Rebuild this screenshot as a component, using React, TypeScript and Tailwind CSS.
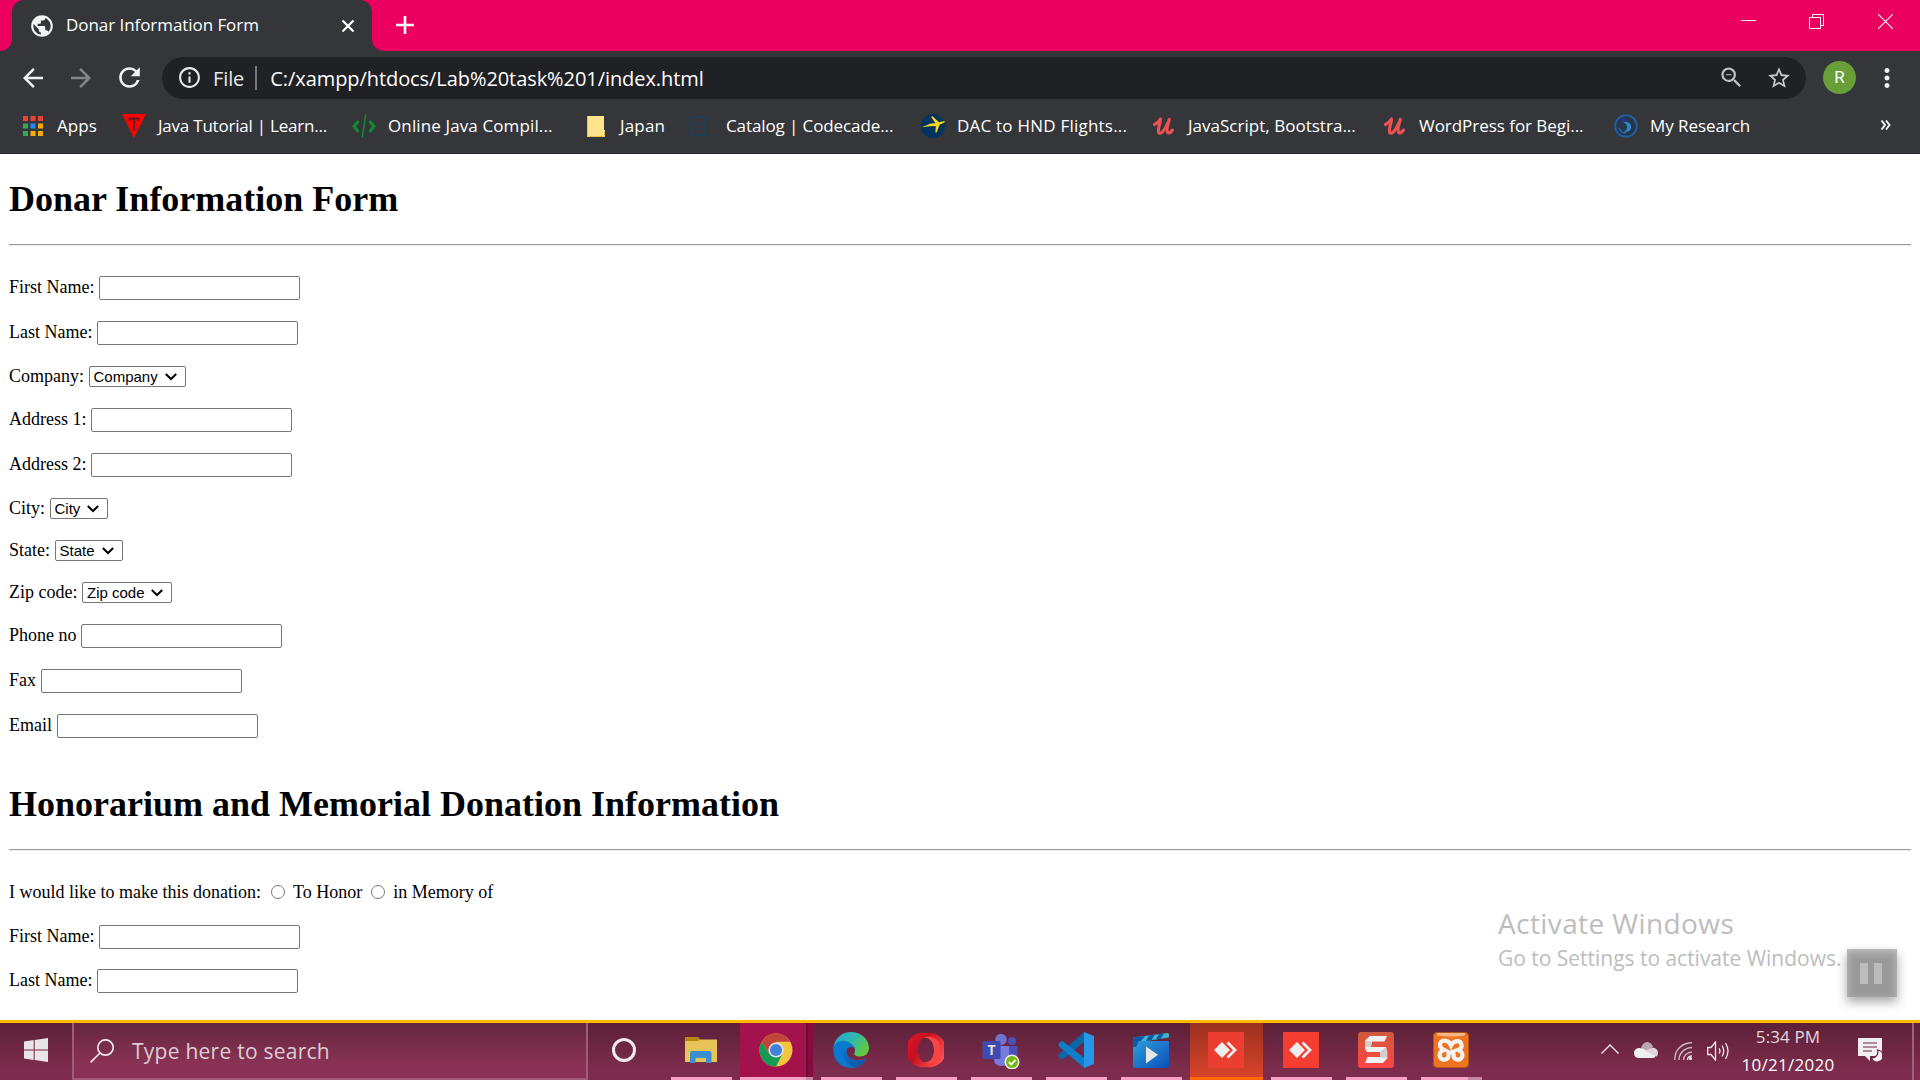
import type { ReactNode } from "react";
import {
  MdArrowBack,
  MdArrowForward,
  MdInfoOutline,
  MdMoreVert,
  MdPublic,
  MdRefresh,
  MdStarBorder,
  MdZoomOut,
} from "react-icons/md";

/* ---------- bookmark icons ---------- */

const APP_COLORS = ["#ea4335", "#ea4335", "#ea4335", "#34a853", "#1a8cff", "#f9ab00", "#34a853", "#f9ab00", "#f9ab00"];

function AppsIcon() {
  return (
    <svg viewBox="0 0 24 24" className="size-6">
      {APP_COLORS.map((c, i) => (
        <rect key={i} x={2 + (i % 3) * 7.5} y={2 + Math.floor(i / 3) * 7.5} width="5" height="5" fill={c} />
      ))}
    </svg>
  );
}

function TriangleIcon() {
  return (
    <svg viewBox="0 0 24 24" className="size-6">
      <path d="M0 0H24L12 24Z" fill="#ff0000" />
      <path d="M7.500 7V4.500H16.500V7M12 4.500V17" stroke="#5a1c1f" strokeWidth="1.800" fill="none" />
    </svg>
  );
}

function CodeIcon() {
  return (
    <svg viewBox="0 0 24 24" className="size-6" fill="none" stroke="#12882f">
      <path d="M6.500 7 2 12.500 6.500 18M17.500 7 22 12.500 17.500 18" strokeWidth="3.200" />
      <path d="M13.800 0.500 10.200 23.500" strokeWidth="1.600" />
    </svg>
  );
}

function FolderMark() {
  return (
    <svg viewBox="0 0 24 24" className="size-6">
      <path d="M3 2H20V16H21V23H3Z" fill="#ffe38c" />
      <path d="M3.500 2V22.500H20.500V17" stroke="#e9c04a" fill="none" />
    </svg>
  );
}

function CatalogMark() {
  return (
    <svg viewBox="0 0 24 24" className="size-6" fill="none" stroke="#1f4058">
      <rect x="1" y="3" width="13" height="18" strokeWidth="1.800" />
      <path d="M10.500 10.200C8 8.400 5 9.400 5 12.200S8 16 10.500 14.200" strokeWidth="1.600" />
      <path d="M18 21.500H23.500" strokeWidth="1.600" />
    </svg>
  );
}

function PlaneMark() {
  return (
    <svg viewBox="0 0 24 24" className="size-6">
      <circle cx="12" cy="12" r="12" fill="#00355f" />
      <path
        d="M0.500 13.200 10 9.600 14.500 9.300 10 2.800 11.500 2.200 18 8.200 23.500 7 23.500 8.500 18.600 10.800 15.600 18.500 14.400 18.500 14.800 12 9 12.200Z"
        fill="#ffd51e"
      />
    </svg>
  );
}

function CursiveU() {
  return (
    <svg viewBox="0 0 24 24" className="size-6" fill="none" stroke="#eb5252" strokeLinecap="round" strokeLinejoin="round">
      <path d="M2.500 10.500C5 9.500 7 7.500 8.500 5C8.500 9.500 5.500 14 6.500 18C8 21.500 12.500 17 15.500 9.500" strokeWidth="3.200" />
      <path d="M17.300 5.500C15.500 11 14 16.500 15.800 18.500C17.500 19.500 19.500 17.500 20.500 16" strokeWidth="3.200" />
    </svg>
  );
}

function ResearchMark() {
  return (
    <svg viewBox="0 0 24 24" className="size-6" fill="none">
      <circle cx="12" cy="12" r="10.800" fill="#26364b" stroke="#1f5f9f" strokeWidth="2" />
      <path d="M9 8C14 7 18 10 17 14C16.200 17.500 12.500 18.500 10 17.500C14 16 14.500 10.500 9 8Z" fill="#2f86cc" />
      <path d="M5.500 14C6 17 9 19 12 19" stroke="#2b6fb8" strokeWidth="1.500" />
      <circle cx="9" cy="6" r="2" fill="#2b2f9c" />
    </svg>
  );
}

interface Mark {
  icon: ReactNode;
  label: string;
  box: string;
}

const MARKS: Mark[] = [
  { icon: <AppsIcon />, label: "Apps", box: "w-[101px] tracking-[0.07px]" },
  { icon: <TriangleIcon />, label: "Java Tutorial | Learn...", box: "w-[230px] tracking-[-0.22px]" },
  { icon: <CodeIcon />, label: "Online Java Compil...", box: "w-[232px] tracking-[0.12px]" },
  { icon: <FolderMark />, label: "Japan", box: "w-[106px] tracking-[0.16px]" },
  { icon: <CatalogMark />, label: "Catalog | Codecade...", box: "w-[231px] tracking-[-0.1px]" },
  { icon: <PlaneMark />, label: "DAC to HND Flights...", box: "w-[231px] tracking-[0.22px]" },
  { icon: <CursiveU />, label: "JavaScript, Bootstra...", box: "w-[231px] tracking-[0.02px]" },
  { icon: <CursiveU />, label: "WordPress for Begi...", box: "w-[231px] tracking-[-0.04px]" },
  { icon: <ResearchMark />, label: "My Research", box: "w-[200px] tracking-[-0.06px]" },
];

/* ---------- browser chrome ---------- */

function TabStrip() {
  return (
    <div className="flex h-[51px] text-white">
      <div className="w-3 rounded-br-[12px] bg-[#ec005f]" />
      <div className="w-[360px] bg-[#ec005f]">
        <div className="flex h-full items-center rounded-t-[12px] bg-[#35363a] px-[17px]">
          <MdPublic className="size-[26px] text-[#f1f3f4]" />
          <span className="ml-[11px] flex-1 pb-[2px] text-[17px] tracking-[-0.06px] whitespace-nowrap">Donar Information Form</span>
          <svg viewBox="0 0 14 14" className="size-[14px]" stroke="#fff" strokeWidth="2.200">
            <path d="M1.500 1.500 12.500 12.500M12.500 1.500 1.500 12.500" />
          </svg>
        </div>
      </div>
      <div className="flex flex-1 items-start justify-between rounded-bl-[12px] bg-[#ec005f] pr-[27px] pl-6">
        <svg viewBox="0 0 18 18" className="mt-4 size-[18px]" stroke="#fff" strokeWidth="2.600">
          <path d="M9 0V18M0 9H18" />
        </svg>
        <div className="mt-[14px] flex h-[15px]">
          <svg viewBox="0 0 15 15" className="size-[15px]" stroke="#fff">
            <path d="M0 6.500H15" />
          </svg>
          <svg viewBox="0 0 15 15" className="ml-[53px] size-[15px]" fill="none" stroke="#fff">
            <path d="M0.500 3.500H11.500V14.500H0.500ZM3.500 3.500V0.500H14.500V11.500H11.500" />
          </svg>
          <svg viewBox="0 0 15 15" className="ml-[54px] size-[15px]" stroke="#fff" strokeWidth="1.100">
            <path d="M0 0 15 15M15 0 0 15" />
          </svg>
        </div>
      </div>
    </div>
  );
}

function Toolbar() {
  return (
    <div className="flex h-[54px] items-center pr-[18px] pb-[1px] pl-[18px] text-[#f1f3f4]">
      <MdArrowBack className="size-[30px]" />
      <MdArrowForward className="ml-[18px] size-[30px] text-[#85868a]" />
      <MdRefresh className="ml-[18px] size-[31px]" />
      <div className="ml-[17px] flex h-[42px] w-[1644px] items-center rounded-full bg-[#202124] pr-[14px] pl-[15px]">
        <MdInfoOutline className="size-[25px] text-[#e8eaed]" />
        <span className="ml-[11px] pt-[2px] text-[20px] tracking-[-0.1px] text-[#e8eaed]">File</span>
        <span className="ml-[11px] h-6 w-[2px] bg-[#76777b]" />
        <span className="ml-[13px] flex-1 pt-[2px] text-[20px] tracking-[-0.07px] whitespace-nowrap text-white">
          C:/xampp/htdocs/Lab%20task%201/index.html
        </span>
        <MdZoomOut className="size-[27px] text-[#bfc0c1]" />
        <MdStarBorder className="ml-[21px] size-[26px] text-[#c8c9ca]" />
      </div>
      <span className="ml-[17px] flex size-[33px] items-center justify-center rounded-full bg-[#689f38] font-[Roboto] text-[17px] text-white">
        R
      </span>
      <MdMoreVert className="ml-4 size-[30px]" />
    </div>
  );
}

function BookmarksBar() {
  return (
    <div className="flex h-[49px] items-start border-b border-[#27282b] pt-2 pr-[28px] pl-[21px] text-[17px] text-white">
      {MARKS.map((m) => (
        <div key={m.label} className={`flex h-[25px] shrink-0 items-center gap-3 whitespace-nowrap ${m.box}`}>
          {m.icon}
          <span>{m.label}</span>
        </div>
      ))}
      <svg viewBox="0 0 12 10" className="mt-[7px] ml-auto h-[10px] w-3" fill="none" stroke="#f1f3f4" strokeWidth="1.900">
        <path d="M1.500 0.500 5 5 1.500 9.500M6 0.500 9.500 5 6 9.500" />
      </svg>
    </div>
  );
}

/* ---------- form page ---------- */

function TextRow({ label, last = "mb-[21px]" }: { label: string; last?: string }) {
  return (
    <label className={`flex h-6 items-center gap-[4.500px] ${last}`}>
      <span className="pb-[2px] whitespace-nowrap">{label}</span>
      <input type="text" className="h-6 w-[201px] rounded-[2px] border border-[#767676] bg-white" />
    </label>
  );
}

function SelectRow({ label, value, width }: { label: string; value: string; width: string }) {
  return (
    <label className="mb-[21px] flex h-[21px] items-center gap-[4.500px]">
      <span className="pb-[1px] whitespace-nowrap">{label}</span>
      <span className={`relative flex h-[21px] ${width}`}>
        <select className="h-full w-full appearance-none rounded-[2px] border border-[#767676] bg-white pl-1 font-['Liberation_Sans',sans-serif] text-[15px] leading-[18px]">
          <option>{value}</option>
        </select>
        <svg viewBox="0 0 12 8" className="pointer-events-none absolute top-[7px] right-[9px] h-2 w-3" fill="none" stroke="#000" strokeWidth="2">
          <path d="M0.800 1 6 6 11.200 1" />
        </svg>
      </span>
    </label>
  );
}

function Heading({ children, space }: { children: ReactNode; space: string }) {
  return (
    <>
      <h1 className={`h-[42px] text-[36px] leading-[43px] font-bold ${space}`}>{children}</h1>
      <hr className="mt-6 h-[2px] border-t border-b border-t-[#9a9a9a] border-b-[#eeeeee]" />
    </>
  );
}

function Radio({ label }: { label: string }) {
  return (
    <label className="flex items-center">
      <input type="radio" name="kind" className="mr-2 size-[14px] appearance-none rounded-full border border-[#767676] bg-white" />
      {label}
    </label>
  );
}

function FormPage() {
  return (
    <main className="relative h-[866px] overflow-hidden bg-white px-[9px] font-['Liberation_Serif',serif] text-[18px] leading-6 text-black">
      <Heading space="mt-6">Donar Information Form</Heading>
      <div className="mt-[30px]">
        <TextRow label="First Name:" />
        <TextRow label="Last Name:" />
        <SelectRow label="Company:" value="Company" width="w-[97px]" />
        <TextRow label="Address 1:" />
        <TextRow label="Address 2:" />
        <SelectRow label="City:" value="City" width="w-[58px]" />
        <SelectRow label="State:" value="State" width="w-[68px]" />
        <SelectRow label="Zip code:" value="Zip code" width="w-[90px]" />
        <TextRow label="Phone no" />
        <TextRow label="Fax" />
        <TextRow label="Email" last="mb-0" />
      </div>
      <Heading space="mt-[45px]">Honorarium and Memorial Donation Information</Heading>
      <div className="mt-[29px]">
        <div className="mb-[21px] flex h-6 items-center whitespace-nowrap">
          <span className="mr-[10px]">I would like to make this donation:</span>
          <Radio label="To Honor" />
          <span className="w-[9px]" />
          <Radio label="in Memory of" />
        </div>
        <TextRow label="First Name:" last="mb-5" />
        <TextRow label="Last Name:" />
      </div>

      <div className="absolute top-[749px] left-[1498px] font-['Open_Sans',sans-serif] whitespace-nowrap text-[#bdbdbd]">
        <p className="text-[28px] leading-10 tracking-[0.4px]">Activate Windows</p>
        <p className="text-[21px] leading-[30px] tracking-[-0.02px]">Go to Settings to activate Windows.</p>
      </div>
      <div className="absolute top-[795px] left-[1847px] flex h-12 w-[50px] justify-center gap-[6px] bg-[#999999] pt-[14px] pr-[2px] shadow-[0_5px_10px_rgba(0,0,0,0.35),inset_0_3px_9px_rgba(255,255,255,0.4)]">
        <span className="h-[21px] w-2 bg-[#bcbcbc]" />
        <span className="h-[21px] w-2 bg-[#bcbcbc]" />
      </div>
    </main>
  );
}

/* ---------- taskbar icons ---------- */

function ExplorerIcon() {
  return (
    <svg viewBox="0 0 36 36" className="size-9">
      <path d="M2 5H15L17 7V11H2Z" fill="#b8860b" />
      <path d="M2 9H15L17 7.500H34V30H2Z" fill="#e8c35a" />
      <path d="M7 31V21.500Q7 19 9.500 19H26Q28.500 19 28.500 21.500V31H23V26H12.500V31Z" fill="#3b8fd0" />
    </svg>
  );
}

function ChromeIcon() {
  return (
    <svg viewBox="0 0 36 36" className="size-9">
      <circle cx="18" cy="18" r="16.500" fill="#f3c63f" />
      <path d="M3.710 9.750A16.500 16.500 0 0 0 18 34.500L24.500 21.750 11.500 21.750Z" fill="#159a56" />
      <path d="M3.710 9.750A16.500 16.500 0 0 1 32.290 9.750H18L11.500 21.700Z" fill="#c0453a" />
      <circle cx="18" cy="18" r="7.600" fill="#e6e6e6" />
      <circle cx="18" cy="18" r="6.100" fill="#4380dc" />
    </svg>
  );
}

function EdgeIcon() {
  return (
    <svg viewBox="0 0 36 36" className="size-9">
      <defs>
        <linearGradient id="edgeTop" x1="0" y1="0" x2="1" y2="0.600">
          <stop offset="0" stopColor="#2a9fd6" />
          <stop offset="0.500" stopColor="#2cb8b0" />
          <stop offset="1" stopColor="#62c93f" />
        </linearGradient>
        <linearGradient id="edgeLow" x1="0" y1="0" x2="1" y2="1">
          <stop offset="0" stopColor="#0a78cf" />
          <stop offset="1" stopColor="#0f4f9c" />
        </linearGradient>
      </defs>
      <path d="M0.500 15C2 6 9 0 18 0C28 0 36 7 36 16C36 21 32 24.500 27 24.500C23 24.500 20.500 23 21.500 21C23 18.500 22 13 15 13Z" fill="url(#edgeTop)" />
      <path d="M0.300 15C3 9 9 7.500 14 9.500C19 11.500 21.500 14 22 17C19 13 13 15 13 21C13 27 20 31 33 27C30 33 25 36 18 36C7 36-1 27 0.300 15Z" fill="#0a78cf" />
      <path d="M13.500 16C10 18 9 24 12.500 29C15.500 33.500 20 35.500 24 35C28 33.500 31.500 30.500 33.500 26.800C26 30 17 28 14.500 23C13.300 20.500 13 18 13.500 16Z" fill="url(#edgeLow)" />
    </svg>
  );
}

function OperaIcon() {
  return (
    <svg viewBox="0 0 36 36" className="size-9">
      <defs>
        <linearGradient id="operaRing" x1="0" y1="0" x2="1" y2="0.600">
          <stop offset="0" stopColor="#e5182a" />
          <stop offset="0.450" stopColor="#c3101f" />
          <stop offset="1" stopColor="#ff4d4d" />
        </linearGradient>
      </defs>
      <path
        fillRule="evenodd"
        fill="url(#operaRing)"
        d="M18 1A17 17.300 0 1 0 18 35A17 17.300 0 1 0 18 1ZM18.500 5C23 5 26 11 26 18S23 31 18.500 31S10 25 10 18S14 5 18.500 5Z"
      />
      <path d="M15 6C20 3 26 4.500 30 9C34 15 33 23 29 28C25 32 20 32.500 15.500 30C22 31 26 26 26 18S21 5 15 6Z" fill="#f74444" />
    </svg>
  );
}

function TeamsIcon() {
  return (
    <svg viewBox="0 0 38 38" className="size-[38px]">
      <circle cx="19" cy="8.500" r="5.700" fill="#6f74cf" />
      <circle cx="30" cy="10" r="4" fill="#4a50b4" />
      <path d="M26 15H35.500V25Q35.500 31 29 31H26Z" fill="#4a50b4" />
      <path d="M12 15H27V27Q27 35 19.500 35T12 28Z" fill="#757bdf" />
      <rect x="0.500" y="10" width="18" height="18" rx="1" fill="#4149b0" />
      <text x="9.500" y="24" textAnchor="middle" fontSize="14" fontWeight="700" fill="#dedede" fontFamily="Open Sans">
        T
      </text>
      <circle cx="30" cy="31" r="7.500" fill="#f0f0f0" />
      <circle cx="30" cy="31" r="6" fill="#73b90e" />
      <path d="M26.800 31 29.300 33.500 33.500 28.800" stroke="#fff" strokeWidth="1.800" fill="none" />
    </svg>
  );
}

function EditorIcon() {
  return (
    <svg viewBox="0 0 36 36" className="size-9">
      <path d="M26 0V10L5 27.500Q2 27 0.500 24.500V22.500Z" fill="#0a66a5" />
      <path d="M0.500 12.500Q1 10 4.500 9L27 26.500V36L24.500 34.500 1 14.500Z" fill="#0d7fc9" />
      <path d="M26 0 36 4V32L26 36Z" fill="#2696e8" />
    </svg>
  );
}

function MoviesIcon() {
  return (
    <svg viewBox="0 0 36 36" className="size-9">
      <defs>
        <linearGradient id="movieBody" x1="0" y1="0" x2="1" y2="1">
          <stop offset="0" stopColor="#2f9edb" />
          <stop offset="1" stopColor="#0a4fb8" />
        </linearGradient>
      </defs>
      <path d="M0 5.500 34.500 1Q36 1 36 3V5.500L0 11Z" fill="#3fb4cf" />
      <path d="M0 5.500 12 4 8 9 4.500 15.500H0ZM16 3.400 22 2.600 18.500 8 13 9ZM26 2 31 1.500 28 6.500 23 7.400Z" fill="#0b5aa6" />
      <path d="M6 9H36V34Q36 36 34 36H2Q0 36 0 34V15H3Z" fill="url(#movieBody)" />
      <path d="M13 14.500 25 22.800 13 31.500Z" fill="#e6e6e6" />
    </svg>
  );
}

function DiamondIcon({ fill }: { fill: string }) {
  return (
    <svg viewBox="0 0 36 36" className="size-9">
      <rect width="36" height="36" fill={fill} />
      <path d="M14 10 22 18 14 26 6 18Z" fill="#eeeeee" />
      <path d="M19.500 10.500 27 18 19.500 25.500" stroke="#eeeeee" strokeWidth="2.800" fill="none" />
    </svg>
  );
}

function RibbonIcon() {
  return (
    <svg viewBox="0 0 36 36" className="size-9">
      <defs>
        <linearGradient id="ribbonBg" x1="0" y1="0" x2="0" y2="1">
          <stop offset="0" stopColor="#cf5a3c" />
          <stop offset="1" stopColor="#ff4444" />
        </linearGradient>
      </defs>
      <rect width="36" height="36" rx="3" fill="url(#ribbonBg)" />
      <path d="M7 8.500 12 4H29L26.500 9.500H14L13 15H28L29.500 26 25 31H7L9.500 25H22V20H9L7 17Z" fill="#f1f1f1" />
      <path d="M7 8.500 13.500 9.500 13 15 7 15ZM22 20 28 15 29.500 20 29 26 22 25Z" fill="#d3cecc" />
    </svg>
  );
}

function KnotIcon() {
  return (
    <svg viewBox="0 0 36 36" className="size-9">
      <rect x="0.500" y="0.500" width="35" height="35" rx="3.500" fill="#ee7420" stroke="#b9540f" />
      <path d="M4 1H32V3.500Q18 5.500 4 3.500Z" fill="#f1b58c" />
      <path
        d="M18 13.500C15 6 6.500 8 7 13C7.500 17 10 17.500 11 18C7 19 6 22 7 25C9 29.500 16 28 15.500 23V20.500H20.500V23C20.500 28 27 29.500 29 25C30 22 29 19 25 18C28 17 29 15 28.500 12.500C27.500 8 21 7.500 18 13.500Z"
        fill="none"
        stroke="#f3f3f3"
        strokeWidth="4.200"
      />
    </svg>
  );
}

/* ---------- taskbar ---------- */

function TaskButton({ children, cell = "", line = "w-[61px] bg-[#f7a1c4]" }: { children: ReactNode; cell?: string; line?: string }) {
  return (
    <div className={`flex h-[57px] w-[75px] shrink-0 flex-col items-center ${cell}`}>
      <div className="flex h-[54px] items-center pr-[2px]">{children}</div>
      <div className={`h-[3px] ${line}`} />
    </div>
  );
}

function Taskbar() {
  return (
    <footer className="flex h-[60px] items-stretch border-t-[3px] border-[#ffb900] bg-linear-to-b from-[#5d2037] via-[#7b2b4b] via-75% to-[#7f2d4f] text-white">
      <div className="flex w-[72px] items-center pl-6">
        <svg viewBox="0 0 24 24" className="mb-[4px] size-6" fill="#e9e4e6">
          <path d="M0 3.400 9.700 2V11.400H0ZM10.700 1.900 24 0V11.400H10.700ZM0 12.400H9.700V22L0 20.600ZM10.700 12.400H24V24L10.700 22.100Z" />
        </svg>
      </div>
      <div className="flex w-[516px] items-center border-r-2 border-b-2 border-l-2 border-[#a25a7a] bg-linear-to-b from-[#65263f] via-[#8a3255] via-75% to-[#8a3255] pl-4">
        <svg viewBox="0 0 24 24" className="size-6" fill="none" stroke="#efe6ea" strokeWidth="1.700">
          <circle cx="15.500" cy="8.500" r="7.700" />
          <path d="M10 14 0.600 23.400" />
        </svg>
        <span className="ml-[18px] pt-[3px] text-[21px] tracking-[0.25px] text-[#dccdd4]">Type here to search</span>
      </div>
      <div className="flex w-[76px] items-center justify-center pr-1 pb-[3px]">
        <span className="size-6 rounded-full border-[3px] border-[#f0ecee]" />
      </div>
      <TaskButton>
        <ExplorerIcon />
      </TaskButton>
      <TaskButton
        cell="bg-[linear-gradient(90deg,transparent_1px,#a4124c_1px,#a4124c_67px,#650d33_67px,#650d33_69px,#880a40_69px,#880a40_74px,transparent_74px)]"
        line="w-[73px] bg-[linear-gradient(90deg,#f7a1c4_66px,#c787a2_66px)]"
      >
        <ChromeIcon />
      </TaskButton>
      <TaskButton>
        <EdgeIcon />
      </TaskButton>
      <TaskButton>
        <OperaIcon />
      </TaskButton>
      <TaskButton>
        <TeamsIcon />
      </TaskButton>
      <TaskButton>
        <EditorIcon />
      </TaskButton>
      <TaskButton>
        <MoviesIcon />
      </TaskButton>
      <TaskButton cell="border-x border-transparent bg-linear-to-b from-[#9a3020] to-[#dc452a] bg-clip-padding" line="w-[73px] bg-[#ff6a00]">
        <DiamondIcon fill="#ec3e30" />
      </TaskButton>
      <TaskButton>
        <DiamondIcon fill="#f53d32" />
      </TaskButton>
      <TaskButton>
        <RibbonIcon />
      </TaskButton>
      <TaskButton line="ml-[7px] w-[61px] self-start bg-[linear-gradient(90deg,#f7a1c4_47px,#c787a2_47px)]">
        <KnotIcon />
      </TaskButton>

      <div className="ml-auto flex items-center">
        <svg viewBox="0 0 18 10" className="mb-[5px] h-[10px] w-[18px]" fill="none" stroke="#f0e8eb" strokeWidth="1.400">
          <path d="M0.500 9.500 9 1 17.500 9.500" />
        </svg>
        <svg viewBox="0 0 24 16" className="mb-[3px] ml-[15px] h-4 w-6">
          <path d="M7 6C8 2 10.500 0 13 0C16 0 18.500 2.500 19 5L12 10Z" fill="#b9a5ae" />
          <path d="M5 16C2 16 0 14 0 11C0 8 2.500 6 5.500 6C8 6 10 7 14 9.500L22 13C21.500 15 20.500 16 19 16Z" fill="#efefef" />
          <path d="M11 9 16 6.500C20 4.500 24 7 24 11C24 12.500 23.500 13.500 22.500 14.500Z" fill="#dcd6d9" />
        </svg>
        <svg viewBox="0 0 18 18" className="mb-[1px] ml-4 size-[18px]" fill="none" strokeWidth="1.400">
          <path d="M0.700 18C0.700 8 8 0.700 18 0.700" stroke="#cbb8c0" />
          <path d="M5 18C5 11 11 5.500 18 5.500M9.500 18C9.500 13.500 13.500 10 18 10" stroke="#cbb8c0" />
          <path d="M13.500 18C13.500 15.500 15.500 14 18 14" stroke="#e6dce0" />
          <circle cx="16.500" cy="16.500" r="1.500" fill="#fff" />
        </svg>
        <svg viewBox="0 0 22 20" className="mb-[1px] ml-[15px] h-5 w-[22px]" fill="none" stroke="#f0e8eb" strokeWidth="1.300">
          <path d="M0.700 6.500H4L8.500 1V19L4 13.500H0.700ZM12 7.500Q14 10 12 12.500M15 4.500Q18.500 10 15 15.500M18.500 2Q23.500 10 18.500 18" />
        </svg>
        <div className="ml-[11px] flex w-[96px] flex-col items-center pb-[2px] text-[17px] leading-7">
          <span className="tracking-[0.1px] text-[#e3d8dc]">5:34 PM</span>
          <span className="tracking-[0.26px]">10/21/2020</span>
        </div>
        <svg viewBox="0 0 24 24" className="mb-[3px] ml-[22px] size-6">
          <path d="M0 0H24V18H12V23L7 18H0Z" fill="#f3eef0" />
          <path d="M5 5H19M5 9H19M5 13H14" stroke="#6d2644" strokeWidth="1.200" />
          <path d="M19.500 12A6 6 0 1 1 13.500 20A6 6 0 0 0 19.500 12Z" fill="#f3eef0" stroke="#6d2644" strokeWidth="1.200" />
        </svg>
        <span className="mr-[6px] ml-[30px] h-[57px] w-[2px] bg-[#9f6079]" />
      </div>
    </footer>
  );
}

export default function App() {
  return (
    <div className="flex h-[1080px] w-[1920px] flex-col overflow-hidden font-['Open_Sans',sans-serif]">
      <header className="h-[154px] bg-[#35363a]">
        <TabStrip />
        <Toolbar />
        <BookmarksBar />
      </header>
      <FormPage />
      <Taskbar />
    </div>
  );
}
